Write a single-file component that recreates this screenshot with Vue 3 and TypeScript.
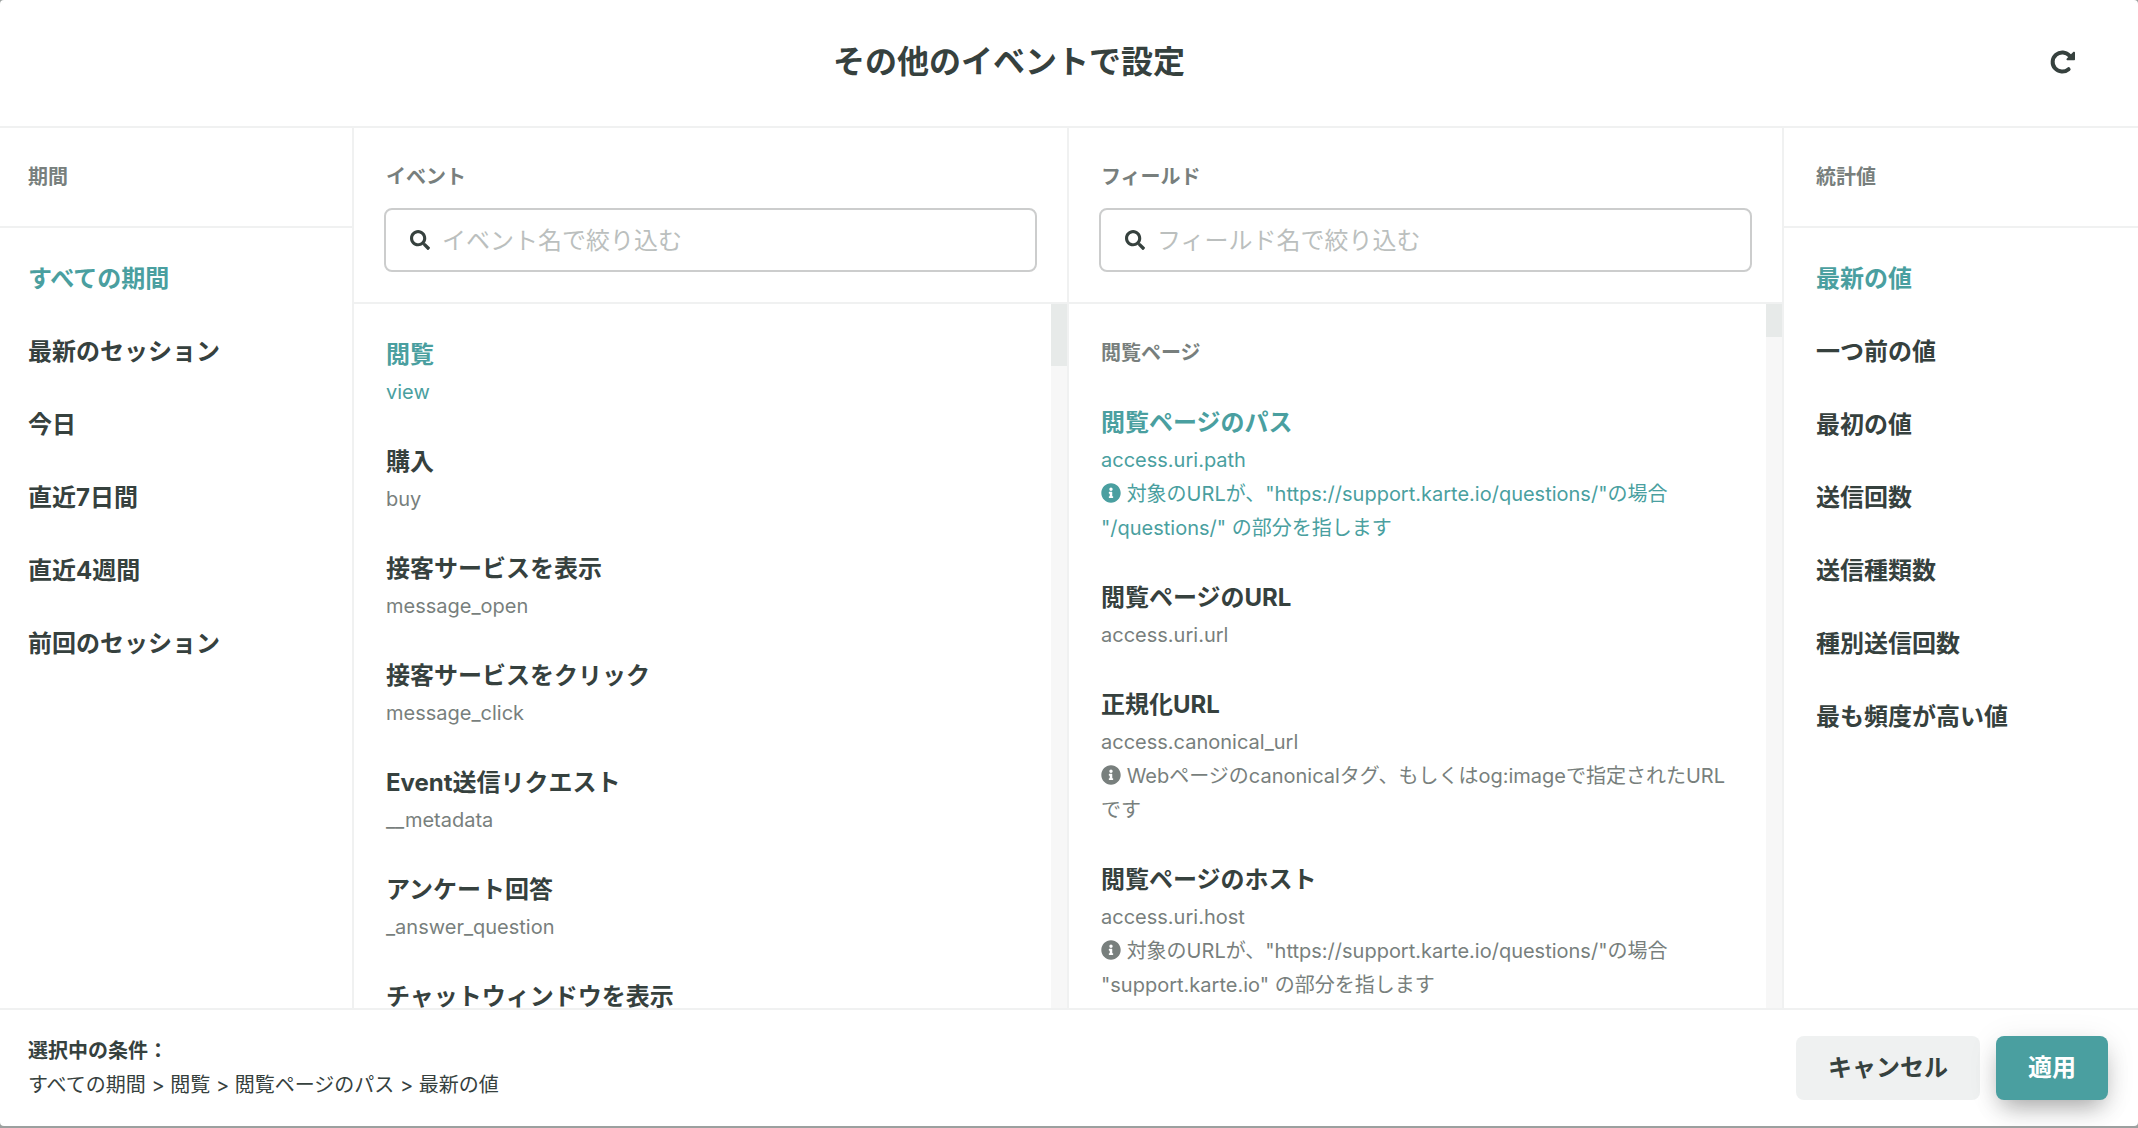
<script setup lang="ts">
import { computed, ref } from 'vue'

interface EventItem {
  label: string
  name: string
}

interface FieldItem {
  label: string
  name: string
  note?: string
}

const periods: string[] = [
  'すべての期間',
  '最新のセッション',
  '今日',
  '直近7日間',
  '直近4週間',
  '前回のセッション',
]

const events: EventItem[] = [
  { label: '閲覧', name: 'view' },
  { label: '購入', name: 'buy' },
  { label: '接客サービスを表示', name: 'message_open' },
  { label: '接客サービスをクリック', name: 'message_click' },
  { label: 'Event送信リクエスト', name: '__metadata' },
  { label: 'アンケート回答', name: '_answer_question' },
  { label: 'チャットウィンドウを表示', name: '' },
]

const fields: FieldItem[] = [
  {
    label: '閲覧ページのパス',
    name: 'access.uri.path',
    note: '対象のURLが、"https://support.karte.io/questions/"の場合 "/questions/" の部分を指します',
  },
  { label: '閲覧ページのURL', name: 'access.uri.url' },
  {
    label: '正規化URL',
    name: 'access.canonical_url',
    note: 'Webページのcanonicalタグ、もしくはog:imageで指定されたURLです',
  },
  {
    label: '閲覧ページのホスト',
    name: 'access.uri.host',
    note: '対象のURLが、"https://support.karte.io/questions/"の場合 "support.karte.io" の部分を指します',
  },
]

const stats: string[] = [
  '最新の値',
  '一つ前の値',
  '最初の値',
  '送信回数',
  '送信種類数',
  '種別送信回数',
  '最も頻度が高い値',
]

const period = ref(periods[0])
const event = ref(events[0].label)
const field = ref(fields[0].label)
const stat = ref(stats[0])
const eventQuery = ref('')
const fieldQuery = ref('')

const matches = (item: EventItem | FieldItem, query: string) =>
  item.label.includes(query) || item.name.includes(query)

const shownEvents = computed(() => events.filter((e) => matches(e, eventQuery.value)))
const shownFields = computed(() => fields.filter((f) => matches(f, fieldQuery.value)))
const summary = computed(() => [period.value, event.value, field.value, stat.value].join(' > '))

function reset() {
  period.value = periods[0]
  event.value = events[0].label
  field.value = fields[0].label
  stat.value = stats[0]
  eventQuery.value = ''
  fieldQuery.value = ''
}
</script>

<template>
  <div class="dialog" role="dialog" aria-labelledby="dialog-title">
    <header class="header">
      <h1 id="dialog-title" class="title">その他のイベントで設定</h1>
      <button class="reset" type="button" aria-label="リセット" @click="reset">
        <svg class="reset-icon" viewBox="0 0 24 24" aria-hidden="true">
          <path class="reset-arc" d="M17.600 19.200A9.600 9.600 0 1 1 18.600 5.800" />
          <path class="reset-head" d="M22.500 1.800Q24 1.200 24 2.800V9.400Q24 10.200 23.200 10.200H16.200Q14.800 10 15.800 8.500Z" />
        </svg>
      </button>
    </header>

    <main class="columns">
      <section class="column side first">
        <div class="column-head">
          <h2 class="caption">期間</h2>
        </div>
        <div class="list">
          <button
            v-for="p in periods"
            :key="p"
            type="button"
            class="item"
            :class="{ active: p === period }"
            @click="period = p"
          >
            <span class="item-label">{{ p }}</span>
          </button>
        </div>
      </section>

      <section class="column">
        <div class="column-head with-search">
          <label class="caption" for="event-search">イベント</label>
          <div class="search">
            <svg class="search-icon" viewBox="0 0 512 512" aria-hidden="true">
              <path
                d="M505 442.7L405.3 343c-4.5-4.5-10.6-7-17-7H372c27.6-35.3 44-79.7 44-128C416 93.1 322.9 0 208 0S0 93.1 0 208s93.1 208 208 208c48.3 0 92.7-16.4 128-44v16.3c0 6.4 2.5 12.5 7 17l99.7 99.7c9.4 9.4 24.6 9.4 33.9 0l28.3-28.3c9.4-9.4 9.4-24.6.1-34zM208 336c-70.7 0-128-57.2-128-128 0-70.7 57.2-128 128-128 70.7 0 128 57.2 128 128 0 70.7-57.2 128-128 128z"
              />
            </svg>
            <input
              id="event-search"
              v-model="eventQuery"
              class="search-input"
              type="text"
              placeholder="イベント名で絞り込む"
            />
          </div>
        </div>
        <div class="scroll">
          <div class="list">
            <button
              v-for="e in shownEvents"
              :key="e.label"
              type="button"
              class="item"
              :class="{ active: e.label === event }"
              @click="event = e.label"
            >
              <span class="item-label">{{ e.label }}</span>
              <span class="item-name">{{ e.name }}</span>
            </button>
          </div>
          <div class="track"><div class="thumb event-thumb"></div></div>
        </div>
      </section>

      <section class="column">
        <div class="column-head with-search">
          <label class="caption" for="field-search">フィールド</label>
          <div class="search">
            <svg class="search-icon" viewBox="0 0 512 512" aria-hidden="true">
              <path
                d="M505 442.7L405.3 343c-4.5-4.5-10.6-7-17-7H372c27.6-35.3 44-79.7 44-128C416 93.1 322.9 0 208 0S0 93.1 0 208s93.1 208 208 208c48.3 0 92.7-16.4 128-44v16.3c0 6.4 2.5 12.5 7 17l99.7 99.7c9.4 9.4 24.6 9.4 33.9 0l28.3-28.3c9.4-9.4 9.4-24.6.1-34zM208 336c-70.7 0-128-57.2-128-128 0-70.7 57.2-128 128-128 70.7 0 128 57.2 128 128 0 70.7-57.2 128-128 128z"
              />
            </svg>
            <input
              id="field-search"
              v-model="fieldQuery"
              class="search-input"
              type="text"
              placeholder="フィールド名で絞り込む"
            />
          </div>
        </div>
        <div class="scroll">
          <div class="list">
            <h3 class="caption group">閲覧ページ</h3>
            <button
              v-for="f in shownFields"
              :key="f.label"
              type="button"
              class="item"
              :class="{ active: f.label === field }"
              @click="field = f.label"
            >
              <span class="item-label">{{ f.label }}</span>
              <span class="item-name">{{ f.name }}</span>
              <span v-if="f.note" class="item-name">
                <svg class="info-icon" viewBox="0 0 512 512" aria-hidden="true">
                  <path
                    d="M256 8C119 8 8 119.1 8 256c0 137 111 248 248 248s248-111 248-248C504 119.1 393 8 256 8zm0 110c23.2 0 42 18.8 42 42s-18.8 42-42 42-42-18.8-42-42 18.8-42 42-42zm56 254c0 6.6-5.4 12-12 12h-88c-6.6 0-12-5.4-12-12v-24c0-6.6 5.4-12 12-12h12v-64h-12c-6.6 0-12-5.4-12-12v-24c0-6.6 5.4-12 12-12h64c6.6 0 12 5.4 12 12v100h12c6.6 0 12 5.4 12 12v24z"
                  />
                </svg>
                {{ f.note }}
              </span>
            </button>
          </div>
          <div class="track"><div class="thumb field-thumb"></div></div>
        </div>
      </section>

      <section class="column side">
        <div class="column-head">
          <h2 class="caption">統計値</h2>
        </div>
        <div class="list">
          <button
            v-for="s in stats"
            :key="s"
            type="button"
            class="item"
            :class="{ active: s === stat }"
            @click="stat = s"
          >
            <span class="item-label">{{ s }}</span>
          </button>
        </div>
      </section>
    </main>

    <footer class="footer">
      <div class="summary">
        <strong class="summary-title">選択中の条件：</strong>
        <span>{{ summary }}</span>
      </div>
      <button class="button" type="button">キャンセル</button>
      <button class="button primary" type="button">適用</button>
    </footer>
  </div>
</template>

<style>
body {
  background: #9ba09f;
}
</style>

<style scoped>
.dialog {
  --ink: #36413e;
  --muted: #787f7d;
  --teal: #4a9fa0;
  --line: #f0f1f1;
  display: flex;
  flex-direction: column;
  box-sizing: border-box;
  height: calc(100vh - 2px);
  overflow: hidden;
  border-radius: 4px;
  background: #fff;
  color: var(--ink);
  font-family: Inter, 'Noto Sans CJK JP', sans-serif;
  font-size: 20px;
  line-height: 34px;
}

button,
input {
  margin: 0;
  border: 0;
  background: none;
  color: inherit;
  font: inherit;
}

button {
  cursor: pointer;
}

.header {
  display: flex;
  flex: none;
  align-items: center;
  height: 124px;
  padding: 0 30px 2px 0;
  border-bottom: 2px solid var(--line);
}

.title {
  flex: 1;
  margin: 0;
  font-size: 32px;
  line-height: 48px;
  text-align: center;
}

.reset {
  display: flex;
  align-items: center;
  justify-content: center;
  width: 90px;
  height: 64px;
  padding: 0;
}

.reset-icon {
  width: 24px;
  height: 24px;
  overflow: visible;
}

.reset-arc {
  fill: none;
  stroke: currentColor;
  stroke-width: 4;
  stroke-linecap: round;
}

.reset-head {
  fill: currentColor;
}

.columns {
  display: flex;
  flex: 1;
  min-height: 0;
}

.column {
  display: flex;
  flex: 1;
  flex-direction: column;
  box-sizing: border-box;
  min-width: 0;
  border-right: 2px solid var(--line);
}

.side {
  flex: 0 0 354px;
}

.column:last-child {
  border-right: 0;
}

.column-head {
  flex: none;
  padding: 32px;
  border-bottom: 2px solid var(--line);
}

.first .column-head {
  padding-left: 28px;
}

.with-search {
  padding: 32px 30px 30px;
}

.caption {
  display: block;
  margin: 0;
  color: var(--muted);
  font-size: 20px;
  font-weight: 700;
  line-height: 34px;
}

.with-search .caption {
  margin: 0 2px 14px;
}

.search {
  display: flex;
  align-items: center;
  gap: 12px;
  box-sizing: border-box;
  height: 64px;
  padding: 0 24px;
  border: 2px solid #cccdcd;
  border-radius: 8px;
}

.search-icon {
  flex: none;
  width: 20px;
  height: 20px;
  fill: currentColor;
}

.search-input {
  flex: 1;
  min-width: 0;
  height: 60px;
  padding: 0;
  outline: 0;
  font-size: 24px;
}

.search-input::placeholder {
  color: #bbbfbe;
  opacity: 1;
}

.scroll {
  display: flex;
  flex: 1;
  min-height: 0;
}

.list {
  flex: 1;
  min-width: 0;
  padding-top: 14px;
  overflow: hidden;
}

.item {
  display: block;
  width: 100%;
  padding: 16px 32px;
  text-align: left;
}

.first .item {
  padding-left: 28px;
}

.item-label {
  display: block;
  font-size: 24px;
  font-weight: 700;
  line-height: 41px;
}

.item-name {
  display: block;
  color: var(--muted);
}

.active,
.active .item-name {
  color: var(--teal);
}

.group {
  padding: 18px 32px 16px;
}

.info-icon {
  width: 20px;
  height: 20px;
  fill: currentColor;
  vertical-align: -2px;
}

.track {
  flex: none;
  width: 16px;
  background: #f7f7f7;
}

.thumb {
  background: #e7eae9;
}

.event-thumb {
  height: 62px;
}

.field-thumb {
  height: 33px;
}

.footer {
  display: flex;
  flex: none;
  align-items: center;
  gap: 16px;
  padding: 24px 30px 24px 28px;
  border-top: 2px solid var(--line);
}

.summary {
  display: flex;
  flex: 1;
  flex-direction: column;
}

.button {
  height: 64px;
  padding: 0 32px;
  border-radius: 8px;
  background: #eff1f1;
  font-size: 24px;
  font-weight: 700;
}

.primary {
  background: var(--teal);
  box-shadow: 0 12px 24px -6px rgba(0, 0, 0, 0.32), 0 4px 32px rgba(0, 0, 0, 0.08);
  color: #fff;
}
</style>
